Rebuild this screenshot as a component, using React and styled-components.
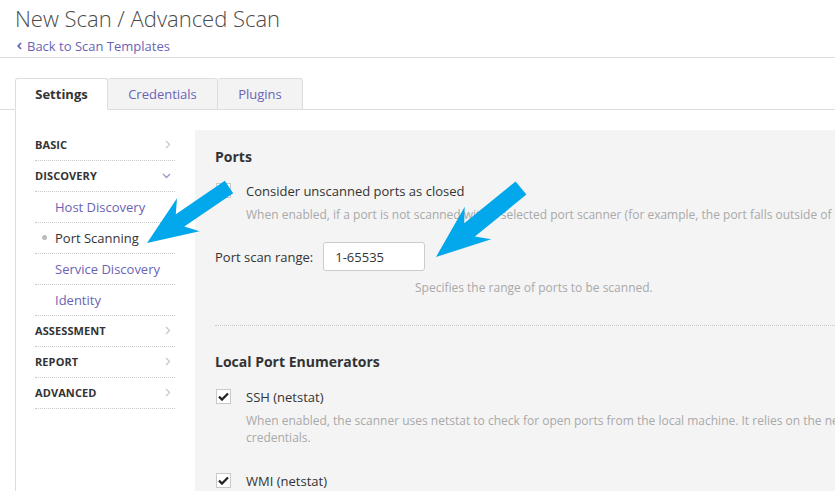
import React from "react";
import styled, { createGlobalStyle } from "styled-components";

const GlobalStyle = createGlobalStyle`
  html, body { margin: 0; padding: 0; background: #fff; overflow: hidden; }
  body { font-family: "Open Sans", "Liberation Sans", sans-serif; color: #333; }
  * { box-sizing: border-box; }
`;

const LINK = "#6a63b5";

const Page = styled.div`
  position: relative;
  width: 835px;
  height: 491px;
  overflow: hidden;
  display: flex;
  flex-direction: column;
`;

const Header = styled.header`
  height: 58px;
  padding: 3px 15px 0;
  border-bottom: 1px solid #ddd;
`;

const Title = styled.h1`
  margin: 0;
  font-size: 22px;
  line-height: 30px;
  font-weight: 300;
  color: #4a4a4a;
  white-space: nowrap;
`;

const BackLink = styled.a`
  display: inline-flex;
  align-items: center;
  gap: 5px;
  margin-top: 3px;
  margin-left: 2px;
  font-size: 13px;
  line-height: 18px;
  color: ${LINK};
  text-decoration: none;
`;

const TabBar = styled.nav`
  display: flex;
  margin-top: 20px;
  padding-left: 15px;
  height: 32px;
  border-bottom: 1px solid #ddd;
`;

const Tab = styled.div`
  width: ${(p) => p.$w}px;
  height: 32px;
  display: flex;
  align-items: center;
  justify-content: center;
  font-size: 13px;
  font-weight: ${(p) => (p.$active ? 700 : 400)};
  color: ${(p) => (p.$active ? "#333" : LINK)};
  background: ${(p) => (p.$active ? "#fff" : "#f3f3f3")};
  border: 1px solid #ddd;
  border-bottom-color: ${(p) => (p.$active ? "#fff" : "#ddd")};
  border-left-width: ${(p) => (p.$first ? 1 : 0)}px;
  border-radius: 3px 3px 0 0;
  margin-bottom: -1px;
`;

const Panel = styled.div`
  flex: 1;
  display: flex;
  margin-left: 15px;
  border-left: 1px solid #ddd;
  padding-top: 20px;
`;

const Sidebar = styled.aside`
  width: 179px;
  flex: none;
  padding: 0 20px 0 19px;
`;

const NavRow = styled.div`
  position: relative;
  height: 31px;
  display: flex;
  align-items: center;
  justify-content: space-between;
  border-bottom: 1px dotted #c8c8c8;
  padding-left: ${(p) => (p.$sub ? 20 : 0)}px;
  padding-right: 4px;
  padding-bottom: 1px;
  font-size: ${(p) => (p.$sub ? 13 : 11)}px;
  font-weight: ${(p) => (p.$sub ? 400 : 700)};
  text-transform: ${(p) => (p.$sub ? "none" : "uppercase")};
  color: ${(p) => (p.$sub && !p.$active ? LINK : "#333")};
  letter-spacing: ${(p) => (p.$sub ? 0 : 0.1)}px;
`;

const ActiveDot = styled.span`
  position: absolute;
  left: 7px;
  top: 12px;
  width: 5px;
  height: 5px;
  border-radius: 50%;
  background: #bbb;
`;

const Content = styled.main`
  flex: 1;
  background: #f4f4f4;
  padding: 17px 0 0 20px;
  overflow: hidden;
`;

const SectionTitle = styled.h2`
  margin: ${(p) => p.$mt || 0}px 0 0;
  font-size: 14px;
  line-height: 20px;
  font-weight: 700;
  color: #333;
`;

const CheckRow = styled.div`
  display: flex;
  align-items: flex-start;
  margin-top: ${(p) => p.$mt}px;
`;

const Box = styled.span`
  flex: none;
  width: 15px;
  height: 15px;
  margin: 1px 15px 0 1px;
  background: #fff;
  border: 1px solid #c9c9c9;
  display: flex;
  align-items: center;
  justify-content: center;
`;

const CheckBody = styled.div`
  display: flex;
  flex-direction: column;
`;

const CheckLabel = styled.div`
  font-size: 13px;
  line-height: 18px;
  color: #333;
  white-space: nowrap;
`;

const Help = styled.div`
  margin-top: ${(p) => p.$mt || 6}px;
  margin-left: ${(p) => p.$ml || 0}px;
  font-size: 12px;
  line-height: 17px;
  color: #a9a9a9;
  white-space: nowrap;
`;

const FieldRow = styled.div`
  display: flex;
  align-items: center;
  margin-top: 19px;
  gap: 10px;
`;

const FieldLabel = styled.label`
  font-size: 13px;
  color: #333;
  white-space: nowrap;
`;

const Input = styled.input`
  width: 102px;
  height: 29px;
  border: 1px solid #ccc;
  border-radius: 3px;
  background: #fff;
  padding: 0 11px;
  font-family: inherit;
  font-size: 13px;
  color: #333;
  outline: none;
`;

const Separator = styled.hr`
  margin: 29px 0 0;
  border: 0;
  border-top: 1px dotted #c8c8c8;
`;

const Overlay = styled.svg`
  position: absolute;
  left: 0;
  top: 0;
  pointer-events: none;
`;

function ChevronRight() {
  return (
    <svg width="6" height="9" viewBox="0 0 6 9">
      <path d="M1 1 L4.5 4.5 L1 8" fill="none" stroke="#c9c9c9" strokeWidth="1.3" />
    </svg>
  );
}

function ChevronDown() {
  return (
    <svg width="9" height="6" viewBox="0 0 9 6">
      <path d="M1 1 L4.5 4.5 L8 1" fill="none" stroke="#9b96c8" strokeWidth="1.3" />
    </svg>
  );
}

function Check() {
  return (
    <svg width="11" height="9" viewBox="0 0 11 9">
      <path d="M1 4.6 L4 7.6 L10 1.4" fill="none" stroke="#222" strokeWidth="2.2" />
    </svg>
  );
}

function arrowPoints(tip, tail, w, hl, hw) {
  const dx = tail[0] - tip[0];
  const dy = tail[1] - tip[1];
  const len = Math.hypot(dx, dy);
  const u = [dx / len, dy / len];
  const n = [-u[1], u[0]];
  const p = (base, a, b) => [base[0] + u[0] * a + n[0] * b, base[1] + u[1] * a + n[1] * b];
  const pts = [
    tip,
    p(tip, hl, hw / 2),
    p(tip, hl * 0.8, w / 2),
    p(tail, 0, w / 2),
    p(tail, 0, -w / 2),
    p(tip, hl * 0.8, -w / 2),
    p(tip, hl, -hw / 2),
  ];
  return pts.map((q) => q.map((v) => v.toFixed(1)).join(",")).join(" ");
}

const nav = [
  { label: "Basic", chev: "right" },
  { label: "Discovery", chev: "down" },
  { label: "Host Discovery", sub: true },
  { label: "Port Scanning", sub: true, active: true },
  { label: "Service Discovery", sub: true },
  { label: "Identity", sub: true },
  { label: "Assessment", chev: "right" },
  { label: "Report", chev: "right" },
  { label: "Advanced", chev: "right" },
];

export default function App() {
  return (
    <Page>
      <GlobalStyle />
      <Header>
        <Title>New Scan / Advanced Scan</Title>
        <BackLink href="#">
          <svg width="5" height="8" viewBox="0 0 5 8">
            <path d="M4 1 L1.2 4 L4 7" fill="none" stroke={LINK} strokeWidth="1.8" />
          </svg>
          Back to Scan Templates
        </BackLink>
      </Header>

      <TabBar>
        <Tab $w={93} $active $first>Settings</Tab>
        <Tab $w={110}>Credentials</Tab>
        <Tab $w={85}>Plugins</Tab>
      </TabBar>

      <Panel>
        <Sidebar>
          {nav.map((item) => (
            <NavRow key={item.label} $sub={item.sub} $active={item.active}>
              {item.active && <ActiveDot />}
              <span>{item.label}</span>
              {item.chev === "right" && <ChevronRight />}
              {item.chev === "down" && <ChevronDown />}
            </NavRow>
          ))}
        </Sidebar>

        <Content>
          <SectionTitle>Ports</SectionTitle>
          <CheckRow $mt={15}>
            <Box />
            <CheckBody>
              <CheckLabel>Consider unscanned ports as closed</CheckLabel>
              <Help>
                When enabled, if a port is not scanned with a selected port scanner (for example, the port falls outside of the specified range), the scanner will consider it closed.
              </Help>
            </CheckBody>
          </CheckRow>

          <FieldRow>
            <FieldLabel>Port scan range:</FieldLabel>
            <Input defaultValue="1-65535" />
          </FieldRow>
          <Help $mt={8} $ml={200}>Specifies the range of ports to be scanned.</Help>

          <Separator />

          <SectionTitle $mt={26}>Local Port Enumerators</SectionTitle>
          <CheckRow $mt={16}>
            <Box><Check /></Box>
            <CheckBody>
              <CheckLabel>SSH (netstat)</CheckLabel>
              <Help>
                When enabled, the scanner uses netstat to check for open ports from the local machine. It relies on the netstat command being available via an SSH connection to the target. This scan is intended for Linux-based systems and requires authentication
                <br />
                credentials.
              </Help>
            </CheckBody>
          </CheckRow>
          <CheckRow $mt={26}>
            <Box><Check /></Box>
            <CheckBody>
              <CheckLabel>WMI (netstat)</CheckLabel>
            </CheckBody>
          </CheckRow>
        </Content>
      </Panel>

      <Overlay width="835" height="491" viewBox="0 0 835 491">
        <polygon points={arrowPoints([147, 243], [229, 187], 15, 50, 40)} fill="#03a7ec" />
        <polygon points={arrowPoints([436, 257], [521, 188], 17, 54, 42)} fill="#03a7ec" />
      </Overlay>
    </Page>
  );
}
